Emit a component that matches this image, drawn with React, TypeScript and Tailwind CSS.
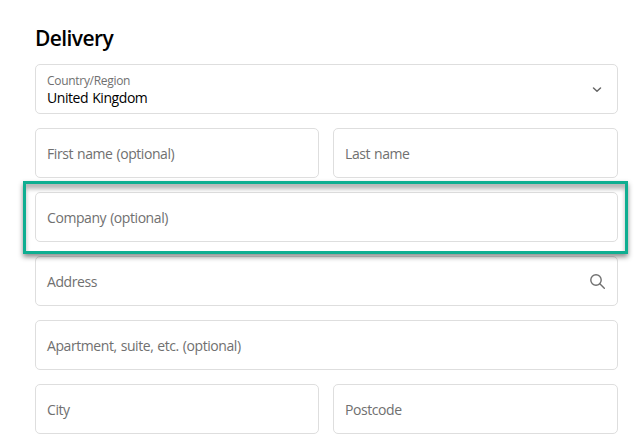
import React from "react";

function Field({ label, children, className = "" }: { label: string; children?: React.ReactNode; className?: string }) {
  return (
    <div className={`flex h-[50px] items-center justify-between rounded-[5px] border border-[#dedede] bg-white pl-[11px] pr-3 ${className}`}>
      <span className="relative top-px whitespace-nowrap text-[#707070]">{label}</span>
      {children}
    </div>
  );
}

export default function App() {
  return (
    <main className="h-[442px] w-[644px] overflow-hidden bg-white pl-[35px] pr-[26px] pt-[24px] font-['Open_Sans','Noto_Sans',sans-serif] text-[14px] leading-5 tracking-[-0.43px] [word-spacing:0.8px]">
      <h1 className="h-10 text-[21px] font-semibold leading-[29px] tracking-[-0.6px] text-black">Delivery</h1>
      <div className="flex flex-col gap-[14px]">
        <div className="flex h-[50px] items-center justify-between rounded-[5px] border border-[#dedede] pl-[11px] pr-[15px]">
          <div className="flex flex-col pt-px">
            <span className="text-[12px] leading-4 tracking-[-0.3px] text-[#707070]">Country/Region</span>
            <span className="leading-[17px] text-black">United Kingdom</span>
          </div>
          <svg className="size-[10px]" viewBox="0 0 10 10" fill="none" stroke="#666" strokeWidth="1.5" strokeLinecap="round" strokeLinejoin="round"><path d="m1.500 4 3.500 3.200L8.500 4" /></svg>
        </div>
        <div className="grid grid-cols-[284px_285px] gap-[14px]">
          <Field label="First name (optional)" />
          <Field label="Last name" />
        </div>
        <div className="relative">
          <Field label="Company (optional)" />
          <div className="absolute -left-3 -right-[10px] -top-[11px] h-[73px] border-[3px] border-[#0fae91] shadow-[0_3px_5px_rgba(0,0,0,0.45),inset_0_5px_4px_rgba(0,0,0,0.28)]" />
        </div>
        <Field label="Address">
          <svg className="size-[15px]" viewBox="0 0 15 15" fill="none" stroke="#707070" strokeWidth="1.4" strokeLinecap="round"><circle cx="6" cy="6" r="5.200" /><path d="m9.800 9.800 4.500 4.500" /></svg>
        </Field>
        <Field label="Apartment, suite, etc. (optional)" />
        <div className="grid grid-cols-[284px_285px] gap-[14px]">
          <Field label="City" />
          <Field label="Postcode" />
        </div>
      </div>
    </main>
  );
}
